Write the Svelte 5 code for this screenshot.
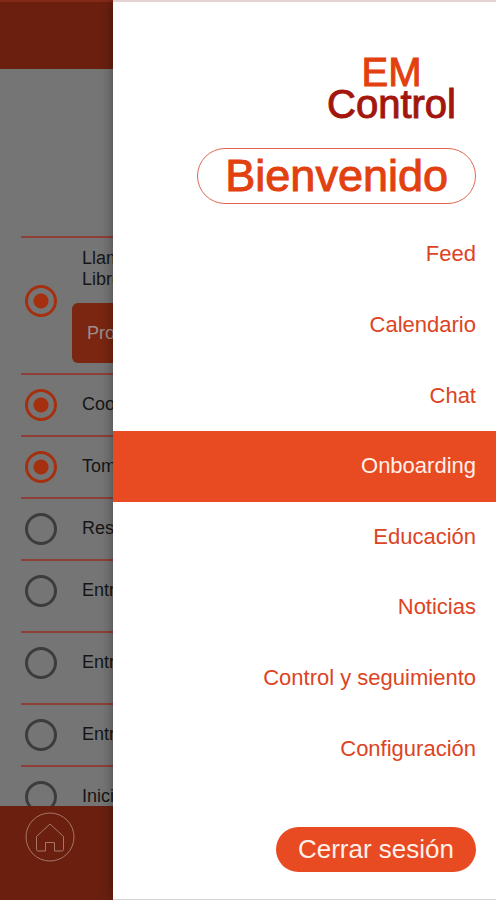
<script lang="ts">
  let active = 'Onboarding';

  const menu = [
    'Feed',
    'Calendario',
    'Chat',
    'Onboarding',
    'Educación',
    'Noticias',
    'Control y seguimiento',
    'Configuración'
  ];

  let tasks = [
    { id: 't1', lines: ['Llamada de', 'Libro de'], action: 'Programar', done: true },
    { id: 't2', lines: ['Coordinar'], done: true },
    { id: 't3', lines: ['Tomar'], done: true },
    { id: 't4', lines: ['Responder'], done: false },
    { id: 't5', lines: ['Entrega'], tall: true, done: false },
    { id: 't6', lines: ['Entrega'], tall: true, done: false },
    { id: 't7', lines: ['Entrega'], done: false },
    { id: 't8', lines: ['Inicio'], done: false }
  ];
</script>

<div class="screen">
  <div class="page">
    <header class="topbar"></header>

    <main>
      <ul class="tasks">
        {#each tasks as task (task.id)}
          <li class="task" class:tall={task.tall} class:with-action={task.action}>
            <input type="checkbox" id={task.id} bind:checked={task.done} />
            <div class="task-body">
              <label for={task.id}>
                {#each task.lines as line}
                  <span>{line}</span>
                {/each}
              </label>
              {#if task.action}
                <button class="task-action">{task.action}</button>
              {/if}
            </div>
          </li>
        {/each}
      </ul>
    </main>

    <footer class="tabbar">
      <button class="home" aria-label="Inicio">
        <svg viewBox="0 0 50 50" fill="none" stroke="currentColor">
          <circle cx="25" cy="25" r="24" />
          <path d="M25 12 L11.5 24.5 V37.5 Q11.5 39 13 39 H20.5 V30.5 H29.5 V39 H37 Q38.5 39 38.5 37.5 V24.5 Z" stroke-linejoin="round" />
        </svg>
      </button>
    </footer>
  </div>

  <aside class="drawer">
    <div class="brand">
      <span class="brand-top">EM</span>
      <span class="brand-bottom">Control</span>
    </div>

    <h1>Bienvenido</h1>

    <nav>
      {#each menu as item}
        <a
          href="#menu"
          class:active={item === active}
          on:click|preventDefault={() => (active = item)}
        >
          {item}
        </a>
      {/each}
    </nav>

    <div class="drawer-footer">
      <button class="logout">Cerrar sesión</button>
    </div>
  </aside>
</div>

<style>
  :global(body) {
    margin: 0;
  }

  .screen {
    position: relative;
    height: 100vh;
    min-height: 720px;
    overflow: hidden;
    font-family: 'Liberation Sans', Arial, Helvetica, sans-serif;
  }

  button {
    font-family: inherit;
    border: none;
    cursor: pointer;
  }

  /* page behind the drawer */
  .page {
    display: flex;
    flex-direction: column;
    height: 100%;
    background: #757575;
  }

  .topbar {
    box-sizing: border-box;
    flex: none;
    height: 69px;
    background: #6b200f;
    border-top: 2px solid #84291a;
  }

  main {
    flex: 1;
    min-height: 0;
    overflow: hidden;
    padding: 167px 0 0 21px;
  }

  .tasks {
    list-style: none;
    margin: 0;
    padding: 0;
  }

  .task {
    box-sizing: border-box;
    display: flex;
    align-items: flex-start;
    gap: 25px;
    min-height: 62px;
    padding: 14px 0 0 4px;
    border-top: 2px solid #8f3f37;
  }

  .task.tall {
    min-height: 72px;
  }

  .task.with-action {
    align-items: center;
    padding: 10px 0 10px 4px;
  }

  .task input {
    appearance: none;
    box-sizing: border-box;
    flex: none;
    width: 32px;
    height: 32px;
    margin: 0;
    border: 3px solid #3c3c3c;
    border-radius: 50%;
  }

  .task input:checked {
    border-color: #a5300f;
    background: radial-gradient(circle, #a5300f 7px, transparent 8px);
  }

  .with-action input {
    margin-bottom: 10px;
  }

  .task-body {
    flex: 1;
    padding-top: 5px;
    color: #161616;
    font-size: 18px;
    line-height: 21px;
  }

  .with-action .task-body {
    padding-top: 0;
  }

  .task label span {
    display: block;
  }

  .task-action {
    width: 200px;
    height: 60px;
    margin: 13px 0 0 -10px;
    padding: 0 15px;
    border-radius: 6px;
    background: #7a2610;
    color: #9f8f8b;
    font-size: 18px;
    text-align: left;
  }

  .tabbar {
    box-sizing: border-box;
    flex: none;
    height: 94px;
    padding: 6px 25px;
    background: #6b200f;
  }

  .home {
    width: 50px;
    height: 50px;
    padding: 0;
    background: none;
    color: #a5756a;
  }

  .home svg {
    display: block;
    width: 100%;
    height: 100%;
  }

  /* drawer */
  .drawer {
    position: absolute;
    inset: 0 0 0 113px;
    box-sizing: border-box;
    display: flex;
    flex-direction: column;
    background: #fff;
    border-top: 2px solid #e5d2d5;
    border-bottom: 1px solid #d5d5d5;
    box-shadow: 0 0 12px rgba(0, 0, 0, 0.4);
  }

  .brand {
    align-self: flex-end;
    display: flex;
    flex-direction: column;
    align-items: center;
    margin: 54px 20px 0 0;
    padding-right: 20px;
    font-size: 40px;
    line-height: 32px;
    -webkit-text-stroke: 1px currentColor;
  }

  .brand-top {
    color: #e3400f;
  }

  .brand-bottom {
    color: #a3160c;
  }

  h1 {
    align-self: flex-end;
    margin: 28px 20px 15px;
    padding: 0 27px;
    border: 1px solid #e0674f;
    border-radius: 28px;
    color: #e3400f;
    font-size: 45px;
    font-weight: 400;
    line-height: 54px;
    -webkit-text-stroke: 1px currentColor;
  }

  nav {
    flex: 1;
    display: flex;
    flex-direction: column;
  }

  nav a {
    flex: 1;
    display: flex;
    align-items: center;
    justify-content: flex-end;
    padding: 0 20px;
    color: #dc4424;
    font-size: 22px;
    text-decoration: none;
  }

  nav a.active {
    background: #e84a21;
    color: #fff0ea;
  }

  .drawer-footer {
    display: flex;
    justify-content: flex-end;
    padding: 43px 20px 27px;
  }

  .logout {
    height: 45px;
    padding: 0 22px;
    border-radius: 23px;
    background: #e84a21;
    color: #fff0ea;
    font-size: 26px;
  }
</style>
